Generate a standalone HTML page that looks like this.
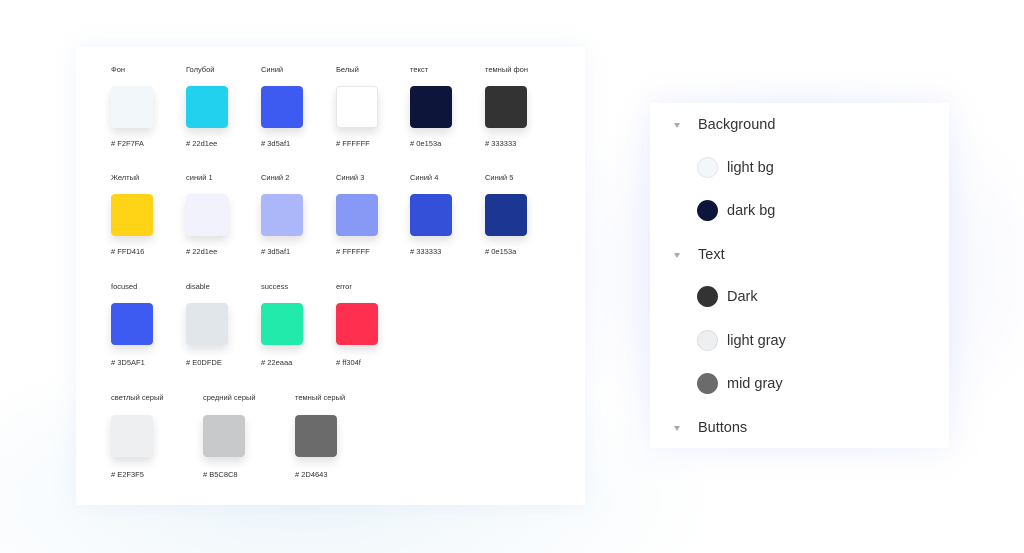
<!DOCTYPE html>
<html><head><meta charset="utf-8"><style>
*{margin:0;padding:0;box-sizing:border-box}
body{width:1024px;height:553px;overflow:hidden;position:relative;font-family:"Liberation Sans",sans-serif;
background:radial-gradient(ellipse 260px 200px at 800px 270px,#eef0fd 0%,rgba(255,255,255,0) 100%),radial-gradient(ellipse 420px 160px at 300px 500px,#eef6fb 0%,rgba(255,255,255,0) 100%),#fff}
.card{position:absolute;background:#fff}
.l{position:absolute;font-size:7.5px;color:#333}
.sw{position:absolute;width:42px;height:42px;border-radius:4px;box-shadow:0 5px 9px rgba(0,0,0,.12)}
.r{position:absolute;font-size:14.5px;color:#333}
.tri{position:absolute;width:0;height:0;border-left:3.5px solid transparent;border-right:3.5px solid transparent;border-top:5px solid #aaa}
.c{position:absolute;width:21px;height:21px;border-radius:50%}
</style></head><body>
<div class="card" style="left:76px;top:47px;width:509px;height:458px;box-shadow:0 0 20px rgba(200,215,240,.25)"></div>
<div class="card" style="left:650px;top:103px;width:299px;height:345px;box-shadow:0 0 30px rgba(190,200,250,.3)"></div>

<div class="l" style="left:111px;top:65px">Фон</div>
<div class="l" style="left:186px;top:65px">Голубой</div>
<div class="l" style="left:261px;top:65px">Синий</div>
<div class="l" style="left:336px;top:65px">Белый</div>
<div class="l" style="left:410px;top:65px">текст</div>
<div class="l" style="left:485px;top:65px">темный фон</div>
<div class="sw" style="left:111px;top:86px;background:#f2f7fa"></div>
<div class="sw" style="left:186px;top:86px;background:#22d1ee"></div>
<div class="sw" style="left:261px;top:86px;background:#3d5af1"></div>
<div class="sw" style="left:336px;top:86px;background:#fff;border:1px solid #e6e6e6"></div>
<div class="sw" style="left:410px;top:86px;background:#0e153a"></div>
<div class="sw" style="left:485px;top:86px;background:#333"></div>
<div class="l" style="left:111px;top:139px"># F2F7FA</div>
<div class="l" style="left:186px;top:139px"># 22d1ee</div>
<div class="l" style="left:261px;top:139px"># 3d5af1</div>
<div class="l" style="left:336px;top:139px"># FFFFFF</div>
<div class="l" style="left:410px;top:139px"># 0e153a</div>
<div class="l" style="left:485px;top:139px"># 333333</div>

<div class="l" style="left:111px;top:173px">Желтый</div>
<div class="l" style="left:186px;top:173px">синий 1</div>
<div class="l" style="left:261px;top:173px">Синий 2</div>
<div class="l" style="left:336px;top:173px">Синий 3</div>
<div class="l" style="left:410px;top:173px">Синий 4</div>
<div class="l" style="left:485px;top:173px">Синий 5</div>
<div class="sw" style="left:111px;top:194px;background:#ffd416"></div>
<div class="sw" style="left:186px;top:194px;background:#f2f2fd"></div>
<div class="sw" style="left:261px;top:194px;background:#abb7f8"></div>
<div class="sw" style="left:336px;top:194px;background:#8899f5"></div>
<div class="sw" style="left:410px;top:194px;background:#3450d8"></div>
<div class="sw" style="left:485px;top:194px;background:#1c3693"></div>
<div class="l" style="left:111px;top:247px"># FFD416</div>
<div class="l" style="left:186px;top:247px"># 22d1ee</div>
<div class="l" style="left:261px;top:247px"># 3d5af1</div>
<div class="l" style="left:336px;top:247px"># FFFFFF</div>
<div class="l" style="left:410px;top:247px"># 333333</div>
<div class="l" style="left:485px;top:247px"># 0e153a</div>

<div class="l" style="left:111px;top:282px">focused</div>
<div class="l" style="left:186px;top:282px">disable</div>
<div class="l" style="left:261px;top:282px">success</div>
<div class="l" style="left:336px;top:282px">error</div>
<div class="sw" style="left:111px;top:303px;background:#3d5af1"></div>
<div class="sw" style="left:186px;top:303px;background:#e0e6e9"></div>
<div class="sw" style="left:261px;top:303px;background:#22eaaa"></div>
<div class="sw" style="left:336px;top:303px;background:#ff304f"></div>
<div class="l" style="left:111px;top:358px"># 3D5AF1</div>
<div class="l" style="left:186px;top:358px"># E0DFDE</div>
<div class="l" style="left:261px;top:358px"># 22eaaa</div>
<div class="l" style="left:336px;top:358px"># ff304f</div>

<div class="l" style="left:111px;top:393px">светлый серый</div>
<div class="l" style="left:203px;top:393px">средний серый</div>
<div class="l" style="left:295px;top:393px">темный серый</div>
<div class="sw" style="left:111px;top:415px;background:#eeeff1"></div>
<div class="sw" style="left:203px;top:415px;background:#c8c9cb"></div>
<div class="sw" style="left:295px;top:415px;background:#6b6b6b"></div>
<div class="l" style="left:111px;top:470px"># E2F3F5</div>
<div class="l" style="left:203px;top:470px"># B5C8C8</div>
<div class="l" style="left:295px;top:470px"># 2D4643</div>

<div class="tri" style="left:674px;top:123px"></div>
<div class="r" style="left:698px;top:117px">Background</div>
<div class="c" style="left:697px;top:157px;background:#f2f7fa;border:1px solid #e3e6e8"></div>
<div class="r" style="left:727px;top:160px">light bg</div>
<div class="c" style="left:697px;top:200px;background:#0e153a"></div>
<div class="r" style="left:727px;top:203px">dark bg</div>
<div class="tri" style="left:674px;top:253px"></div>
<div class="r" style="left:698px;top:247px">Text</div>
<div class="c" style="left:697px;top:286px;background:#333"></div>
<div class="r" style="left:727px;top:289px">Dark</div>
<div class="c" style="left:697px;top:330px;background:#eeeff1;border:1px solid #dcdde0"></div>
<div class="r" style="left:727px;top:333px">light gray</div>
<div class="c" style="left:697px;top:373px;background:#6b6b6b"></div>
<div class="r" style="left:727px;top:376px">mid gray</div>
<div class="tri" style="left:674px;top:426px"></div>
<div class="r" style="left:698px;top:420px">Buttons</div>
</body></html>
